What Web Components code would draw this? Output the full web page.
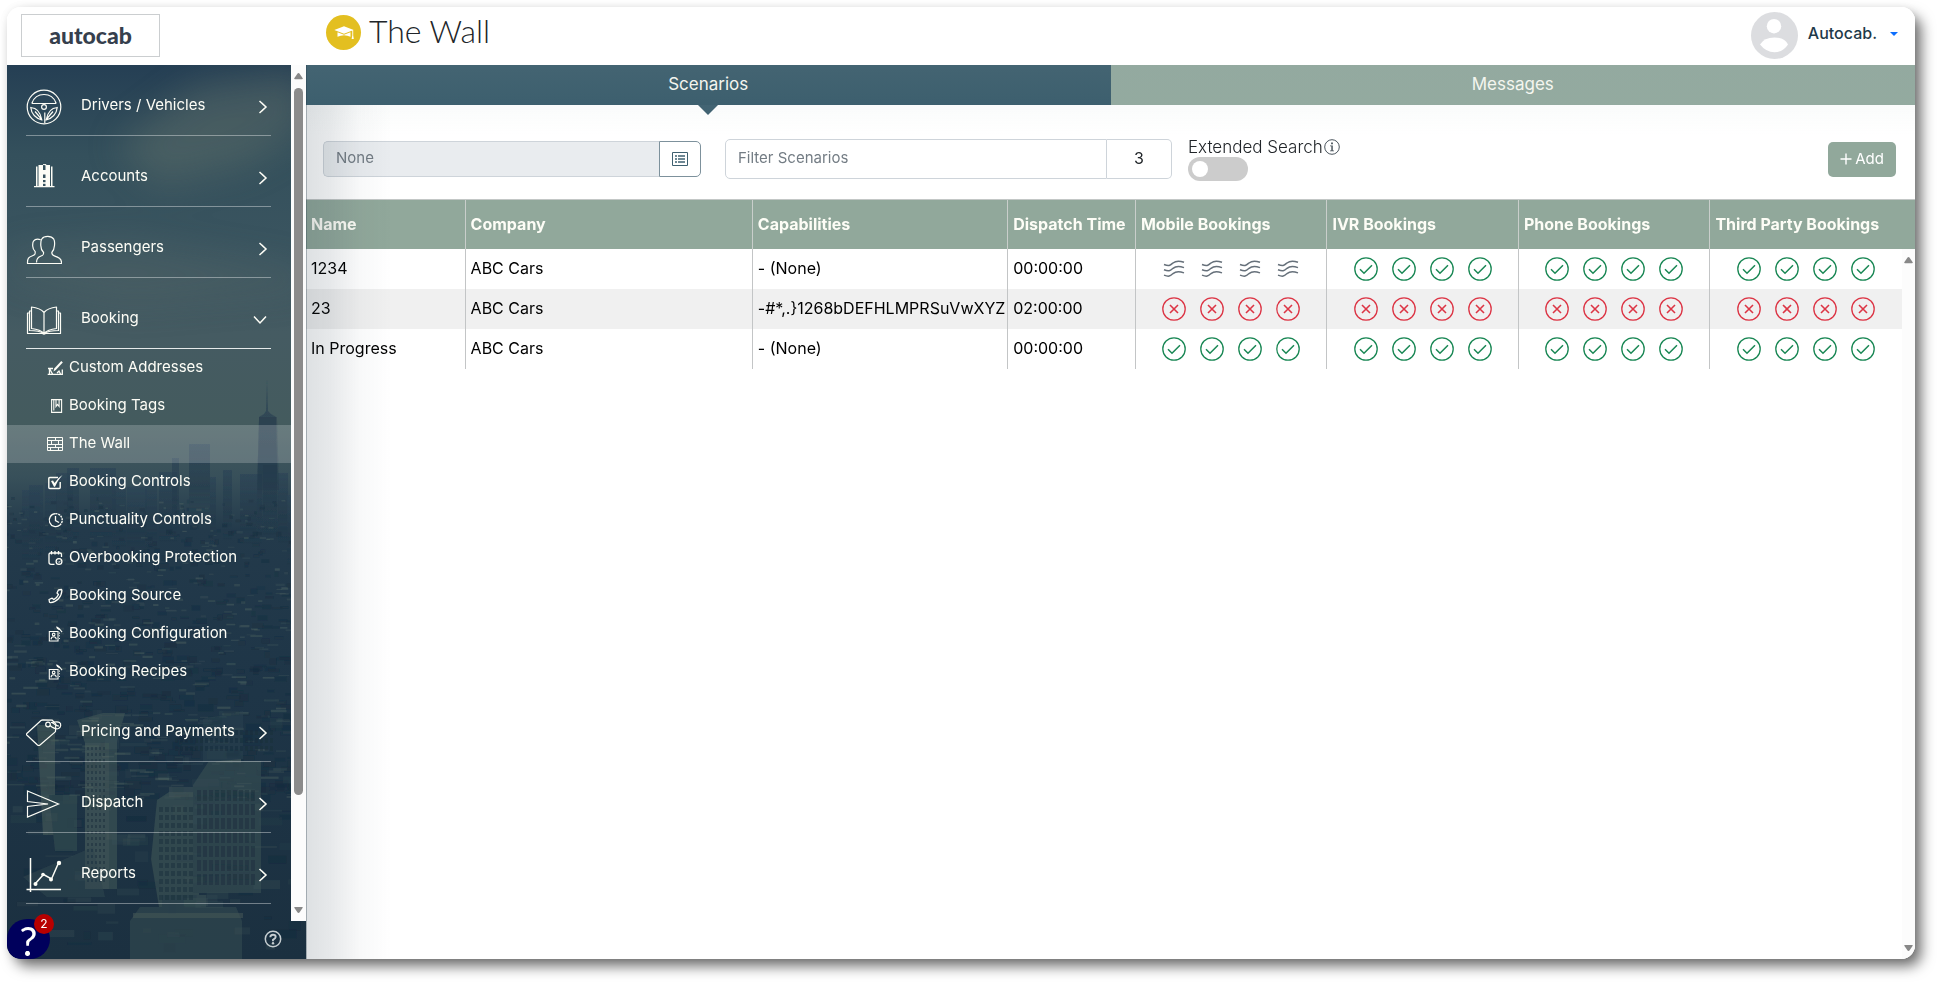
<!DOCTYPE html>
<html lang="en">
<head>
<meta charset="utf-8">
<title>The Wall</title>
<style>
  html, body { margin: 0; height: 100%; background: #fff; }
  body { font: 400 16px/24px Inter, "Liberation Sans", sans-serif; color: #212529; overflow: hidden; }
</style>
</head>
<body>
<app-shell>
  <app-header slot="header" heading="The Wall" user="Autocab."></app-header>
  <side-nav slot="nav">
    <nav-group icon="wheel" label="Drivers / Vehicles"></nav-group>
    <nav-group icon="building" label="Accounts"></nav-group>
    <nav-group icon="people" label="Passengers"></nav-group>
    <nav-group icon="book" label="Booking" open>
      <nav-link icon="address">Custom Addresses</nav-link>
      <nav-link icon="bookmark">Booking Tags</nav-link>
      <nav-link icon="wall" active>The Wall</nav-link>
      <nav-link icon="check">Booking Controls</nav-link>
      <nav-link icon="clock">Punctuality Controls</nav-link>
      <nav-link icon="calendar">Overbooking Protection</nav-link>
      <nav-link icon="phone">Booking Source</nav-link>
      <nav-link icon="recipe">Booking Configuration</nav-link>
      <nav-link icon="recipe">Booking Recipes</nav-link>
    </nav-group>
    <nav-group icon="tag" label="Pricing and Payments"></nav-group>
    <nav-group icon="send" label="Dispatch"></nav-group>
    <nav-group icon="chart" label="Reports"></nav-group>
  </side-nav>
  <tab-bar>
    <tab-item selected>Scenarios</tab-item>
    <tab-item>Messages</tab-item>
  </tab-bar>
  <scenario-tools></scenario-tools>
  <scenario-table></scenario-table>
  <help-bubble slot="overlay" count="2"></help-bubble>
</app-shell>

<script>
const define = (name, html, setup) => {
  const tpl = document.createElement('template');
  tpl.innerHTML = html;
  customElements.define(name, class extends HTMLElement {
    constructor() {
      super();
      this.attachShadow({ mode: 'open' }).append(tpl.content.cloneNode(true));
    }
    connectedCallback() {
      if (setup && !this.ready) { this.ready = true; setup(this, this.shadowRoot); }
    }
  });
};

/* ---------- icons ---------- */
const ICONS = {
  wheel: ['0 0 36 36', `<g fill="none" stroke="currentColor" stroke-width="1.2"><circle cx="18" cy="18" r="16.8"/><circle cx="18" cy="18" r="2.4"/><path d="M6 14C8 8.500 12.500 5.500 18 5.500S28 8.500 30 14q-.5.600-1.500.500h-21Q6.500 14.600 6 14zM4.800 18.500c5 .3 9.500 4 11 12.300-6-1.300-10.500-6-11-12.300zm26.400 0c-5 .3-9.500 4-11 12.300 6-1.300 10.500-6 11-12.300zM9 22.500l6 7m12-7-6 7M18.800 23.500V34"/></g>`],
  building: ['0 0 36 36', `<g fill="currentColor"><path d="M12.500 5H17v21.500h-4.500zM19.500 5H24v21.500h-4.500zM16 10h5v4.500h-5zM16 18h5v2h-5zM10 6.500h1.500v20H10zM25 6.500h1.500v20H25zM8 26h20.500v1.300H8z"/><path d="M16.500 22h3.500v2h-3.500z" opacity=".8"/></g><path d="M17 4.600h3v1" fill="none" stroke="currentColor"/>`],
  people: ['0 0 36 36', `<g fill="none" stroke="currentColor" stroke-width="1.200" stroke-linejoin="round"><path d="M10.500 33.500c0-4 1.500-5.500 4.500-6.500 2.500-.8 2.600-1.500 2.600-3.500-2-2-2.800-4-2.800-7 0-2.700-.3-4.500 1-6.500 1.200-1.900 3.700-2.600 6-2.600s4.800 1 6 2.800c1.200 2 .8 3.700.7 6.300-.2 3-1 5-2.700 7 0 2 .2 2.600 2.500 3.400 4 1.300 7.200 2.500 7.200 6.600v1H1.500c-.2-5 1.200-6.500 5-7.800 2.700-.9 2.800-1.700 2.700-4-1.700-2-2.500-3.500-2.500-5.700 0-2-.2-3.300.8-4.800 1.500-2 4.500-2.300 7.200-1.400" transform="translate(0 -2)"/></g>`],
  book: ['0 0 36 36', `<g fill="none" stroke="currentColor" stroke-width="1.200" stroke-linejoin="round"><path d="M18 10.500C15 7 10 5.500 5.500 5v21.500C10.500 27 15 28 18 31.500zM18 10.500C21 7 26 5.500 30.500 5v21.500C25.500 27 21 28 18 31.500z"/><path d="M5.500 9H3.500v19.500c6 0 10.500.5 14.500 3 4-2.500 8.500-3 14.500-3V9h-2"/><path d="M3.500 11h-2v20.500h15q1.500 1.200 3 0h15V11h-2"/></g>`],
  tag: ['0 0 36 36', `<g fill="none" stroke="currentColor" stroke-width="1.200" stroke-linejoin="round"><path d="M.8 18.500 15 5.500q.8-.700 1.800-.700l9.500.300 3.500 4-.3 7.500L14 30q-1.300 1-2.500 0L.8 20q-.8-.8 0-1.500z"/><circle cx="22" cy="9.500" r="2.300"/><path d="M24 10.500c2 2 6 4 8.500 3s3-4.500 1-6-5.500-.500-8.500 0m1 0c2 1.500 5.500 3.500 7 3.500"/></g>`],
  send: ['0 0 36 36', `<g fill="none" stroke="currentColor" stroke-width="1.200" stroke-linejoin="miter"><path d="M1.500 5 32.500 18 1.500 31V20.500L22 18 1.500 15.500z"/></g>`],
  chart: ['0 0 36 36', `<g fill="none" stroke="currentColor" stroke-width="1.500"><path d="M4.500 1v34M.5 32.500h34.500M9 27l8.500-9.500 8 4.500L32.500 6"/></g><g fill="currentColor"><circle cx="9.500" cy="27" r="2"/><circle cx="17" cy="17.500" r="1.800"/><circle cx="25" cy="22.500" r="2"/><circle cx="33" cy="6" r="2.200"/></g>`],
  address: ['0 0 16 16', `<g fill="none" stroke="currentColor" stroke-width="1.300"><path d="M1 8.500h5M.7 14.300h14.600V9.500M2.500 14V8.500l3 5.500M10 13l2-2 1.500 3"/></g><path fill="currentColor" d="m6.500 11.500.8-3 7-7.500 1.500 1.500-7 7.600z"/>`],
  bookmark: ['0 0 16 16', `<g fill="none" stroke="currentColor" stroke-width="1.100"><path d="M4.600 1.600h10v12.800h-10z"/><path d="M6.800 1.600v11M9 2v6.500l1.500-2 1.600 2V2" /></g>`],
  wall: ['0 0 16 16', `<path fill="none" stroke="currentColor" stroke-width="1" d="M.5 1.500h15v13H.5zM.5 4.500h15M.5 8.500h15M.5 11.500h15M8.500 1.500v3M4.500 4.500v4m7-4v4m-3 0v3m-5 0v3m8-3v3"/>`],
  check: ['0 0 16 16', `<path fill="none" stroke="currentColor" stroke-width="1.400" d="M11 3.500H2.800q-1 0-1 1v9q0 1 1 1h9.400q1 0 1-1V8"/><path fill="currentColor" d="m4 7 2-.5 1.500 2.500Q11 3.500 15.500 1 10.500 6.500 8 12.800H7z"/>`],
  clock: ['0 0 16 16', `<path fill="none" stroke="currentColor" stroke-width="1.300" d="M8.500 1.600A6.500 6.500 0 1 0 13 13M8.500 4v4.500l3.500 2"/><path fill="none" stroke="currentColor" stroke-width="1.400" stroke-dasharray="2 .8" d="M8.500 1.600A6.500 6.500 0 0 1 13 13"/>`],
  calendar: ['0 0 16 16', `<g fill="none" stroke="currentColor" stroke-width="1.300"><path d="M7.500 14.300H4q-2 0-2-2V4.500q0-1.500 1.500-1.500h9.500q1.500 0 1.500 1.500V7M4.500 1v3.500M8 1v3.500M11.500 1v3.500"/><circle cx="12" cy="11.500" r="2.900"/><path d="M11 11.500l1 1 1.500-1.800" stroke-width="1"/></g>`],
  phone: ['0 0 16 16', `<path fill="none" stroke="currentColor" stroke-width="1.300" stroke-linejoin="round" d="M11.500 1.800 14.500 1.500q.5.300.4 1C14.500 9 10 14 3.500 14.700q-.7 0-1-.5L2 11.500l3.200-1.300 1.500 1.400Q10 10 11.500 6.500L10 5z"/>`],
  recipe: ['0 0 16 18', `<g fill="none" stroke="currentColor" stroke-width="1.200"><path d="M1.600 6.200h9.800v10.600H1.600zM12.500 8h1m-1 3h1m-1 3h1"/><circle cx="6.500" cy="9.500" r="1.500"/><path d="M3.500 15q.3-3 3-3t3 3M9.500.8l3 2 3.500 4M10 .8q0 2 3 3.500"/></g>`],
  chevron: ['0 0 10 14', `<path fill="none" stroke="currentColor" stroke-width="1.500" d="m1.500 1 6.500 6-6.500 6"/>`],
  cap: ['0 0 20 14', `<path fill="currentColor" d="M10 .3 19.700 4 10 7.700.3 4zM3.500 6.200 10 8.700l6.500-2.500v4.600Q10 7.500 3.500 10.800zM18.300 4.500h.9v5l.6 3.500h-2.200l.7-3.500z"/>`],
  list: ['0 0 16 14', `<path fill="none" stroke="currentColor" d="M.5.5h15v13H.5z"/><path fill="currentColor" d="M3 3h2v2H3zm3 0h7v2H6zM3 6h2v2H3zm3 0h7v2H6zM3 9h2v2H3zm3 0h7v2H6z" opacity=".75"/>`],
  info: ['0 0 16 16', `<circle cx="8" cy="8" r="7.300" fill="none" stroke="currentColor" stroke-width="1"/><path fill="currentColor" d="M7.100 3.600h1.800v1.600H7.100zM6 6.500h2.800v5H10v.8H6v-.8h1.300V7.300H6z"/>`],
  question: ['0 0 18 18', `<g fill="none" stroke="currentColor"><circle cx="9" cy="9" r="7.700" stroke-width="1.500"/><path stroke-width="1.900" d="M6.300 7.300q0-2.600 2.700-2.600t2.700 2.300Q11.700 8.300 9 9.800v1.400"/></g><circle cx="9" cy="13.200" r="1.200" fill="currentColor"/>`],
  plus: ['0 0 12 12', `<path stroke="currentColor" stroke-width="1.400" d="M6 .5v11M.5 6h11"/>`],
  avatar: ['0 0 47 47', `<circle cx="23.500" cy="23.500" r="23.500" fill="#dcdde0"/><ellipse cx="23" cy="14.200" rx="7.200" ry="7.200" fill="#fff"/><path fill="#fff" d="M9 32.500q4-7 14.500-7t13.500 7q-5 7.700-13.500 7.700T9 32.500z"/>`],
  allow: ['0 0 24 24', `<g fill="none" stroke="#198754" stroke-width="1.300"><circle cx="12" cy="12" r="11.200"/><path stroke-width="1.500" d="m6 12.300 4 3.900 8-8"/></g>`],
  deny: ['0 0 24 24', `<g fill="none" stroke="#dc3545" stroke-width="1.300"><circle cx="12" cy="12" r="11.200"/><path stroke-width="1.600" d="m8 8 8 8m0-8-8 8"/></g>`],
  pass: ['0 0 24 24', `<path fill="none" stroke="#66707a" stroke-width="1.500" d="M2 7.500c5 2 6 1 9-1.500s6-2.500 11-.7M2 12.800c5 2 6 1 9-1.500s6-2.500 11-.7M2 18.100c5 2 6 1 9-1.500s6-2.500 11-.7"/>`],
  up: ['0 0 10 8', `<path fill="currentColor" d="M5 0q.8 0 1.300.8L9.800 6q.4 1-.8 1H1Q-.2 7 .2 6L3.700.8Q4.200 0 5 0z"/>`],
  down: ['0 0 10 8', `<path fill="currentColor" d="M5 8q.8 0 1.300-.8L9.800 2q.4-1-.8-1H1Q-.2 1 .2 2l3.500 5.200Q4.200 8 5 8z"/>`]
};
define('ui-icon', `<style>:host{display:inline-block;flex:none}svg{display:block;width:100%;height:100%}</style>`, (el, root) => {
  const [box, body] = ICONS[el.getAttribute('name')];
  const t = document.createElement('template');
  t.innerHTML = `<svg viewBox="${box}" aria-hidden="true">${body}</svg>`;
  root.append(t.content);
});
const icon = (name, cls = '') => {
  const el = document.createElement('ui-icon');
  el.setAttribute('name', name);
  if (cls) el.className = cls;
  return el;
};

/* ---------- shell ---------- */
define('app-shell', `<style>
  :host { display: block; height: 100vh; box-sizing: border-box; padding: 7px 23px 23px 7px; }
  .frame { display: grid; grid-template: 58px 1fr / 299px 1fr; height: 100%; border-radius: 14px; overflow: hidden; background: #fff; position: relative; }
  .shadow { height: 100%; border-radius: 14px; box-shadow: 7px 8px 14px -1px rgba(0,0,0,.58), 0 0 8px rgba(0,0,0,.06); }
  .head { grid-column: 1 / -1; min-width: 0; }
  .nav { min-height: 0; display: grid; }
  main { min-width: 0; min-height: 0; display: flex; flex-direction: column; position: relative; box-sizing: border-box; }
  main::after { content: ""; position: absolute; inset: 0; pointer-events: none;
    background: linear-gradient(90deg, rgba(30,50,65,.3) 1px, transparent 1px),
      linear-gradient(90deg, rgba(30,50,65,.15), rgba(30,50,65,.11) 24px, rgba(30,50,65,.03) 54px, transparent 86px) 0 40px no-repeat,
      linear-gradient(rgba(150,165,165,.12), rgba(150,180,170,.03) 50px, transparent 70px); }
</style>
<div class="shadow"><div class="frame">
  <div class="head"><slot name="header"></slot></div>
  <div class="nav"><slot name="nav"></slot></div>
  <main><slot></slot></main>
  <slot name="overlay"></slot>
</div></div>`);

define('app-header', `<style>
  :host { display: grid; grid-template-columns: 299px 1fr auto; height: 58px; background: #fff; }
  .brand { margin: 7px 0 0 14px; width: 137px; height: 41px; border: 1px solid #cbced0; color: #363f4d;
    font: 900 23px/40px Lato, "Liberation Sans", sans-serif; text-align: center; text-decoration: none; }
  .title { display: flex; align-items: center; gap: 8px; padding: 0 0 7px 20px; }
  .badge { width: 35px; height: 35px; border-radius: 50%; background: #e3bf20; color: #fff; display: grid; place-items: center; }
  .badge ui-icon { width: 20px; height: 14px; }
  h1 { margin: 0; padding-bottom: 4px; font: 300 32px/40px Lato, "Liberation Sans", sans-serif; color: #212529; }
  button { display: flex; align-items: center; gap: 10px; border: 0; background: none; padding: 0 17px 4px 0; font: 500 16px/24px Inter, sans-serif; color: #1f3a4a; }
  .user { padding-bottom: 2px; }
  .photo { width: 47px; height: 47px; margin-top: 2px; }
  .caret { margin-left: 3px; border: 4px solid transparent; border-top-color: #0d6efd; border-bottom: 0; }
</style>
<a class="brand" href="#">autocab</a>
<div class="title"><span class="badge"><ui-icon name="cap"></ui-icon></span><h1></h1></div>
<button type="button"><ui-icon class="photo" name="avatar"></ui-icon><span class="user"></span><span class="caret"></span></button>`,
(el, root) => {
  root.querySelector('h1').textContent = el.getAttribute('heading');
  root.querySelector('.user').textContent = el.getAttribute('user');
});

/* ---------- sidebar ---------- */
define('scroll-rail', `<style>
  :host { display: flex; flex-direction: column; align-items: center; box-sizing: border-box; padding: 8px 0; color: #888; background: #fcfcfc; }
  ui-icon { width: 9px; height: 7px; }
  .track { flex: 1; width: 9px; margin: 8px 0; display: flex; flex-direction: column; }
  .thumb { height: var(--thumb, 0); background: #8b8b8b; border-radius: 5px; }
</style><ui-icon name="up"></ui-icon><div class="track"><div class="thumb"></div></div><ui-icon name="down"></ui-icon>`);

define('city-backdrop', `<style>:host{display:block;overflow:hidden}svg{display:block;width:100%;height:100%}</style>`, (el, root) => {
  let seed = 11;
  const rnd = () => (seed = (seed * 16807) % 2147483647) / 2147483647;
  const box = (x, y, w, h, c, o) => `<rect x="${x.toFixed(1)}" y="${y.toFixed(1)}" width="${w.toFixed(1)}" height="${h.toFixed(1)}" fill="${c}" opacity="${o.toFixed(2)}"/>`;
  let town = '';
  for (let i = 0; i < 900; i++) {
    const d = rnd(), y = 432 + d * 300, s = 2 + d * 6;
    const light = rnd() > .6;
    town += box(rnd() * 306 - 6, y, s * (1 + rnd() * 1.6), light ? 1 + rnd() * 1.5 : 2 + rnd() * s, light ? '#5b7068' : '#162b3c', .14 + rnd() * .24);
  }
  for (let i = 0; i < 130; i++) {
    const y = 640 + rnd() * 240;
    town += box(rnd() * 300, y, 6 + rnd() * 22, 1 + rnd() * 10, rnd() > .5 ? '#48605f' : '#15293a', .08 + rnd() * .16);
  }
  const sky = [[15,425,18],[22,420,14],[38,418,12],[49,408,17],[60,403,12],[83,403,26],[105,412,14],[120,422,20],[138,414,12],[152,407,18],[165,393,7],[182,379,21],[203,412,6],[216,405,9],[233,409,22],[256,400,14],[271,408,10],[280,430,8]];
  const windows = (x, y, w, h, dx, dy) => {
    let s = '';
    for (let a = x; a < x + w; a += dx) for (let b = y; b < y + h; b += dy) s += `M${a} ${b}h${dx - 2}v${dy - 3}h-${dx - 2}z`;
    return `<path d="${s}" fill="#152b3a" opacity=".42"/>`;
  };
  const t = document.createElement('template');
  t.innerHTML = `<svg viewBox="0 0 299 894" preserveAspectRatio="none" aria-hidden="true">
  <defs><linearGradient id="g" x2="0" y2="1"><stop offset="0" stop-color="#253f54"/><stop offset=".1" stop-color="#34505c"/><stop offset=".22" stop-color="#3b5560"/><stop offset=".3" stop-color="#455b62"/><stop offset=".4" stop-color="#445b5e"/><stop offset=".46" stop-color="#38505a"/><stop offset=".52" stop-color="#233a4b"/><stop offset=".7" stop-color="#1e3547"/><stop offset="1" stop-color="#1b3040"/></linearGradient>
  <linearGradient id="s" x2="0" y2="1"><stop offset="0" stop-color="#2c4456" stop-opacity=".7"/><stop offset=".6" stop-color="#22394a" stop-opacity=".6"/><stop offset="1" stop-color="#22394a" stop-opacity="0"/></linearGradient>
  <filter id="b" x="-50%" y="-50%" width="200%" height="200%"><feGaussianBlur stdDeviation="18"/></filter>
  <filter id="soft"><feGaussianBlur stdDeviation=".6"/></filter></defs>
  <rect width="299" height="894" fill="url(#g)"/>
  <g filter="url(#b)" fill="#61706a" opacity=".48"><path d="M110 80 190 20 299 5v60L240 100l-90 20z"/><path d="M0 185l120-10 180 30v20L120 240 0 215z" opacity=".55"/></g>
  <g filter="url(#soft)">
  <g fill="url(#s)">${sky.map(([x, y, w]) => `<rect x="${x}" y="${y}" width="${w}" height="70"/>`).join('')}
  <path d="M252 352l5-3 2-3 1-31 1 31 3 3 5 3v4l3 110h-23l3-110z"/></g>
  <path d="M252 352h18v3l2 70h-22l2-70z" fill="#22394a" opacity=".4"/>
  ${town}
  <g opacity=".5"><path d="M70 655l26-7h22l-8 28v148H78V678z" fill="#475d5b"/><path d="M78 678h24v146H78z" fill="#6a786b" opacity=".45"/>
  <path d="M30 660h18v110H36z" fill="#50645f"/><path d="M42 730h28v56H48z" fill="#3b5354"/>
  <path d="M150 735l12-8h30v115h-40l-8-48z" fill="#465c5a"/><path d="M162 722h30v10h-30z" fill="#6a786b" opacity=".5"/>
  <path d="M186 720l16-24h52v132h-68z" fill="#3f5658"/><path d="M200 696l12-10h22v12z" fill="#5d7068"/><path d="M166 700h30v-46l40-8v48z" fill="#2d4550"/>
  <path d="M123 856l10-14h22v-12h44v12h30l6 14v38H123z" fill="#3a5154"/><path d="M126 848h110v5H126z" fill="#6a786b" opacity=".6"/><path d="M16 812l70-30 12 50H40z" fill="#445c5b" opacity=".6"/></g>
  ${windows(80, 682, 20, 136, 4, 6)}${windows(190, 725, 60, 90, 6, 14)}${windows(152, 742, 36, 90, 6, 8)}${windows(168, 665, 100, 24, 5, 8)}
  </g></svg>`;
  root.append(t.content);
});

define('side-nav', `<style>
  :host { display: grid; min-height: 0; position: relative; color: #fdfdf6; }
  city-backdrop { position: absolute; inset: 0; }
  nav, .foot { position: relative; }
  .cols { display: grid; grid-template: minmax(0, 1fr) 38px / 1fr 15px; min-height: 0; }
  nav { overflow: hidden; }
  .foot { grid-column: 1 / -1; display: flex; justify-content: flex-end; align-items: center; padding: 0 24px 2px 0; }
  .foot button { border: 0; background: none; padding: 0; color: #c5cdd0; }
  .foot ui-icon { width: 18px; height: 18px; display: block; }
  scroll-rail { position: relative; --thumb: 707px; }
</style><city-backdrop></city-backdrop>
<div class="cols"><nav aria-label="Main"><slot></slot></nav><scroll-rail></scroll-rail>
<div class="foot"><button type="button" aria-label="Help"><ui-icon name="question"></ui-icon></button></div></div>`);

define('nav-group', `<style>
  :host { display: block; }
  button { display: grid; grid-template-columns: 36px 1fr 10px; column-gap: 19px; align-items: center; width: calc(100% - 39px); height: 71px; margin: 0 0 0 19px; padding: 9px 3px 0 0;
    border: 0; border-bottom: 1px solid rgba(255,255,255,.38); background: none; color: inherit; font: 400 15px/20px Inter, sans-serif; text-align: left; }
  :host([open]) button { border-bottom-color: #e6eaea; }
  .pic { width: 36px; height: 36px; margin-top: 4px; }
  .arrow { width: 10px; height: 14px; margin-top: 4px; }
  :host([open]) button { padding-right: 6px; }
  :host([open]) .arrow { transform: rotate(90deg); }
</style><button type="button"><span></span><ui-icon class="arrow" name="chevron"></ui-icon></button><slot></slot>`,
(el, root) => {
  const button = root.querySelector('button');
  root.querySelector('span').textContent = el.getAttribute('label');
  button.setAttribute('aria-expanded', el.hasAttribute('open'));
  button.prepend(icon(el.getAttribute('icon'), 'pic'));
});

define('nav-link', `<style>
  :host { display: block; }
  a { display: flex; align-items: center; gap: 6px; height: 38px; box-sizing: border-box; padding: 0 0 2px 40px; color: inherit; text-decoration: none; font: 400 15px/20px Inter, sans-serif; }
  :host([active]) a { background: rgba(255,255,255,.2); }
  ui-icon { width: 16px; height: 16px; margin-top: 2px; }
</style><a href="#"><span><slot></slot></span></a>`,
(el, root) => {
  const a = root.querySelector('a');
  a.prepend(icon(el.getAttribute('icon')));
  if (el.hasAttribute('active')) a.setAttribute('aria-current', 'page');
});

/* ---------- main area ---------- */
define('tab-bar', `<style>:host { display: flex; height: 40px; flex: none; }</style><slot></slot>`,
  el => el.setAttribute('role', 'tablist'));

define('tab-item', `<style>
  :host { display: block; flex: 1; position: relative; }
  button { width: 100%; height: 100%; border: 0; padding: 0 0 2px; background: #93aa9f; color: #fdfdf6; font: 400 17px/24px Inter, sans-serif; }
  :host([selected]) button { background: #385b6b; }
  :host([selected])::after { content: ""; position: absolute; top: 100%; left: calc(50% - 10px); border: 10px solid transparent; border-top-color: #3e6070; border-bottom: 0; }
</style><button type="button" role="tab"><slot></slot></button>`,
  (el, root) => root.querySelector('button').setAttribute('aria-selected', el.hasAttribute('selected')));

define('toggle-switch', `<style>
  :host { display: flex; flex-direction: column; }
  .cap { display: flex; align-items: center; height: 18px; margin-top: -1px; padding-bottom: 1px; gap: 1px; color: #212529; font: 300 17px/18px Inter, sans-serif; }
  .cap ui-icon { width: 16px; height: 16px; color: #4a545c; }
  input { appearance: none; margin: 0; width: 60px; height: 24px; border-radius: 12px; background: #ccc; padding: 4px; box-sizing: border-box; }
  input::before { content: ""; display: block; width: 16px; height: 16px; border-radius: 50%; background: #fff; }
</style><div class="cap"><label for="sw"><slot></slot></label><ui-icon name="info"></ui-icon></div><input id="sw" type="checkbox" role="switch">`);

define('scenario-tools', `<style>
  :host { display: flex; align-items: flex-start; height: 94px; flex: none; box-sizing: border-box; padding: 34px 19px 0 17px; }
  .group { display: flex; box-sizing: border-box; }
  input { min-width: 0; border: 1px solid #ced4da; border-radius: 5px 0 0 5px; box-sizing: border-box; padding: 0 12px 2px; font: 400 15px/24px Inter, sans-serif; color: #6c757d; background: #fff; }
  input::placeholder { color: #737c84; opacity: 1; }
  .pick { flex: 378 1 0; height: 36px; margin-top: 2px; }
  .pick input { flex: 1; background: #e9ecef; border-right: 0; }
  .pick button { width: 42px; border: 1px solid #7d919c; border-radius: 0 5px 5px 0; background: #fff; display: grid; place-items: center; padding: 0; color: #3e6070; }
  .pick ui-icon { width: 16px; height: 14px; }
  .find { flex: 447 1 0; height: 40px; margin: 0 16px 0 24px; }
  .find input { flex: 1; }
  output { width: 65px; box-sizing: border-box; border: 1px solid #ced4da; border-left: 0; border-radius: 0 5px 5px 0; text-align: center; line-height: 36px; }
  .rest { flex: 708 1 0; display: flex; justify-content: space-between; }
  .add { margin-top: 3px; height: 35px; width: 68px; display: flex; align-items: center; justify-content: center; gap: 3px; border: 0; border-radius: 5px; padding: 0 0 2px; background: #91a89b; color: #fff; font: 400 15px/24px Inter, sans-serif; }
  .add ui-icon { width: 12px; height: 12px; }
</style>
<div class="group pick"><input disabled aria-label="Company group" placeholder="None"><button type="button" aria-label="Choose"><ui-icon name="list"></ui-icon></button></div>
<div class="group find"><input aria-label="Filter Scenarios" placeholder="Filter Scenarios"><output>3</output></div>
<div class="rest"><toggle-switch>Extended Search</toggle-switch><button class="add" type="button"><ui-icon name="plus"></ui-icon>Add</button></div>`);

define('status-set', `<style>
  :host { display: flex; justify-content: center; gap: 14px; }
  ui-icon { width: 24px; height: 24px; }
</style>`, (el, root) => {
  for (let i = 0; i < 4; i++) root.append(icon(el.getAttribute('state')));
});

define('scenario-table', `<style>
  :host { display: block; flex: 1; min-height: 0; position: relative; border-top: 1px solid #c3c7c6; overflow: hidden; }
  table { width: calc(100% - 13px); table-layout: fixed; border-collapse: separate; border-spacing: 0; color: #000; }
  th { height: 49px; padding: 0 0 2px 5px; box-sizing: border-box; background: #91a89b; color: #fdfdf6; font: 700 16px/24px Inter, sans-serif; text-align: left; white-space: nowrap; border-right: 1px solid #c9cecb; }
  th:last-child { border-right: 0; box-shadow: 13px 0 #91a89b; }
  td { height: 40px; padding: 0 0 2px 5px; box-sizing: border-box; white-space: nowrap; line-height: 24px; border-right: 1px solid #c3c5c6; }
  td:last-child { border-right: 0; }
  td.s { padding: 0; }
  tbody tr:nth-child(even) td { background: #f0f0f0; }
  scroll-rail { position: absolute; right: 0; top: 49px; bottom: 0; width: 13px; }
</style>
<table><colgroup><col style="width:10%"><col style="width:18%"><col style="width:16%"><col style="width:8%"><col style="width:12%"><col style="width:12%"><col style="width:12%"><col style="width:12%"></colgroup>
<thead><tr><th>Name</th><th>Company</th><th>Capabilities</th><th>Dispatch Time</th><th>Mobile Bookings</th><th>IVR Bookings</th><th>Phone Bookings</th><th>Third Party Bookings</th></tr></thead><tbody></tbody></table>
<scroll-rail></scroll-rail>`, (el, root) => {
  const rows = [
    ['1234', 'ABC Cars', '- (None)', '00:00:00', ['pass', 'allow', 'allow', 'allow']],
    ['23', 'ABC Cars', '-#*,.}1268bDEFHLMPRSuVwXYZ', '02:00:00', ['deny', 'deny', 'deny', 'deny']],
    ['In Progress', 'ABC Cars', '- (None)', '00:00:00', ['allow', 'allow', 'allow', 'allow']]
  ];
  root.querySelector('tbody').innerHTML = rows.map(r =>
    `<tr>${r.slice(0, 4).map(c => `<td>${c}</td>`).join('')}${r[4].map(s => `<td class="s"><status-set state="${s}"></status-set></td>`).join('')}</tr>`).join('');
});

define('help-bubble', `<style>
  :host { position: absolute; left: 0; bottom: 0; }
  button { display: block; width: 43px; height: 40px; border: 0; padding: 0; border-radius: 20px 20px 20px 14px; background: #00005c; color: #fff; font: 400 40px/44px Lato, sans-serif; }
  .count { position: absolute; left: 27px; top: -5px; width: 20px; height: 20px; border-radius: 50%; background: #b80000; color: #fff; font: 400 12px/19px Inter, sans-serif; text-align: center; }
</style><button type="button" aria-label="Help centre">?</button><span class="count"></span>`,
  (el, root) => { root.querySelector('.count').textContent = el.getAttribute('count'); });
</script>
</body>
</html>
